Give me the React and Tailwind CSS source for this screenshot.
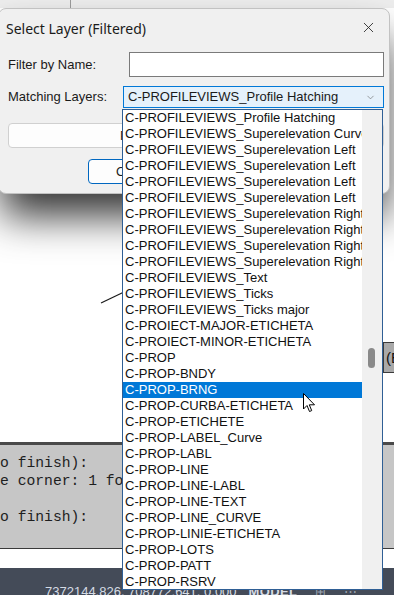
import { X, ChevronDown } from "lucide-react";

const layers = [
  "C-PROFILEVIEWS_Profile Hatching",
  "C-PROFILEVIEWS_Superelevation Curve",
  "C-PROFILEVIEWS_Superelevation Left",
  "C-PROFILEVIEWS_Superelevation Left",
  "C-PROFILEVIEWS_Superelevation Left",
  "C-PROFILEVIEWS_Superelevation Left",
  "C-PROFILEVIEWS_Superelevation Right",
  "C-PROFILEVIEWS_Superelevation Right",
  "C-PROFILEVIEWS_Superelevation Right",
  "C-PROFILEVIEWS_Superelevation Right",
  "C-PROFILEVIEWS_Text",
  "C-PROFILEVIEWS_Ticks",
  "C-PROFILEVIEWS_Ticks major",
  "C-PROIECT-MAJOR-ETICHETA",
  "C-PROIECT-MINOR-ETICHETA",
  "C-PROP",
  "C-PROP-BNDY",
  "C-PROP-BRNG",
  "C-PROP-CURBA-ETICHETA",
  "C-PROP-ETICHETE",
  "C-PROP-LABEL_Curve",
  "C-PROP-LABL",
  "C-PROP-LINE",
  "C-PROP-LINE-LABL",
  "C-PROP-LINE-TEXT",
  "C-PROP-LINE_CURVE",
  "C-PROP-LINIE-ETICHETA",
  "C-PROP-LOTS",
  "C-PROP-PATT",
  "C-PROP-RSRV",
];

const selected = "C-PROP-BRNG";

// Pointer cursor drawn over the list
const Cursor = () => (
  <svg width="13" height="20" viewBox="0 0 13 20" className="absolute left-[303px] top-[393px]">
    <path
      d="M0.5 0.5 L0.5 16 L4 12.5 L6.5 18.5 L8.7 17.6 L6.3 11.8 L11.5 11.8 Z"
      fill="#fff"
      stroke="#000"
      strokeWidth="1"
      strokeLinejoin="round"
    />
  </svg>
);

export default function App() {
  return (
    <div className="relative w-[394px] h-[595px] overflow-hidden bg-white font-['Liberation_Sans',Arial,sans-serif] text-[#1a1a1a]">
      {/* AutoCAD background */}
      <div className="flex flex-col h-full">
        <div className="h-[8px] bg-[#eeeeee] flex">
          <div className="ml-[70px] w-px h-full bg-[#9c9c9c]"></div>
        </div>

        {/* drawing area */}
        <div className="relative flex-1 bg-white">
          <svg className="absolute left-0 top-0" width="394" height="434">
            <line x1="101" y1="295" x2="124" y2="284" stroke="#1a1a1a" strokeWidth="1.2" />
          </svg>
          <div className="absolute left-[383px] top-[334px] w-[20px] h-[31px] bg-[#a9a9a9] border border-[#3b3b3b] pl-[2px] text-[15px] leading-[29px] text-[#111]">
            (E
          </div>
        </div>

        {/* command line */}
        <div className="h-[107px] bg-[#c6c6c6] border-t-[3px] border-b border-t-[#4a4a4a] border-b-[#3a3a3a] pt-[9px] font-['Liberation_Mono',monospace] text-[14.7px] leading-[18px] text-[#1e1e1e] whitespace-pre">
          <div>o finish):</div>
          <div>e corner: 1 found</div>
          <div> </div>
          <div>o finish):</div>
        </div>

        <div className="h-[19px] bg-white"></div>

        {/* status bar */}
        <div className="h-[27px] bg-[#444b58] flex items-start pt-[16px] text-[13px] leading-[16px] text-[#d5dbe4]">
          <span className="ml-[45px]">7372144.826, 708772.641, 0.000</span>
          <span className="ml-[12px] font-bold tracking-wide">MODEL</span>
          <span className="ml-[18px] text-[#9aa3b0]">⊞</span>
          <span className="ml-[18px] text-[#9aa3b0]">⋯</span>
        </div>
      </div>

      {/* Dialog */}
      <div className="absolute left-[-2px] top-[8px] w-[392px] h-[186px] bg-[#f0f0f0] border border-[#c2c2c2] rounded-[8px] shadow-[0_26px_40px_-4px_rgba(0,0,0,0.8)] flex flex-col pl-[9px]">
        <div className="h-[37px] flex items-center justify-between pr-[12px]">
          <span className="-ml-[2px] font-['Noto_Sans',sans-serif] text-[14px] text-[#1b1b1b] pt-[1px]">
            Select Layer (Filtered)
          </span>
          <X className="w-[17px] h-[17px] text-[#222]" strokeWidth={1.2} />
        </div>

        <div className="mt-[6px] flex items-center text-[13px]">
          <span className="w-[121px]">Filter by Name:</span>
          <div className="w-[255px] h-[25px] bg-white border border-[#7a7a7a]"></div>
        </div>

        <div className="mt-[9px] flex items-center text-[13px]">
          <span className="w-[115px]">Matching Layers:</span>
          <div className="w-[261px] h-[22px] bg-[#e5f1fb] border border-[#0078d7] flex items-center justify-between pl-[4px] pr-[7px]">
            <span>C-PROFILEVIEWS_Profile Hatching</span>
            <ChevronDown className="w-[11px] h-[11px] text-[#606060]" strokeWidth={1.3} />
          </div>
        </div>

        <div className="mt-[15px] w-[376px] h-[25px] bg-[#fdfdfd] border border-[#d0d0d0] rounded-[4px] flex items-center pl-[111px] text-[13px]">
          Preview
        </div>

        <div className="mt-[11px] ml-[80px] w-[75px] h-[25px] bg-[#fdfdfd] border border-[#0067c0] rounded-[4px] flex items-center justify-center text-[13px]">
          OK
        </div>
      </div>

      {/* Dropdown list */}
      <div className="absolute left-[122px] top-[109px] w-[261px] h-[481px] bg-white border border-[#2f5f95] flex">
        <div className="w-[239px] overflow-hidden">
          {layers.map((name, i) => (
            <div
              key={i}
              className={`h-[16px] leading-[16px] pl-[2px] text-[13px] whitespace-nowrap ${
                name === selected ? "bg-[#0078d7] text-white" : "text-[#111]"
              }`}
            >
              {name}
            </div>
          ))}
        </div>
        <div className="w-[20px] bg-[#f0f0f0] flex flex-col">
          <div className="mt-[238px] ml-[6px] w-[7px] h-[20px] rounded-full bg-[#8a8a8a]"></div>
        </div>
      </div>

      <Cursor />
    </div>
  );
}
